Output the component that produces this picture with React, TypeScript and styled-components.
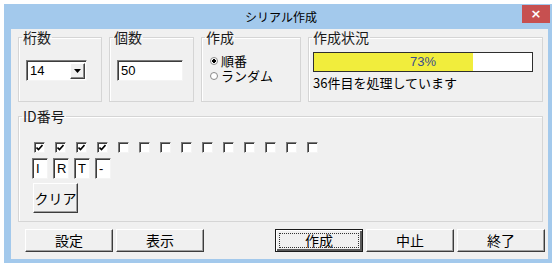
import styled, { createGlobalStyle } from "styled-components";

const GlobalStyle = createGlobalStyle`
  html, body {
    margin: 0;
    padding: 0;
    background: #ffffff;
  }
  body {
    font-family: "Liberation Sans", "Noto Sans CJK JP", sans-serif;
    color: #000;
  }
`;

const digits = ["I", "R", "T", "-"];
const checks = Array.from({ length: 14 }, (_, i) => i < 4);
const progress = 73;

export default function App() {
  return (
    <>
      <GlobalStyle />
      <Window>
        <TitleBar>
          <Title>シリアル作成</Title>
          <CloseButton>×</CloseButton>
        </TitleBar>
        <Client>
          <TopRow>
            <Group>
              <Legend>桁数</Legend>
              <GroupBody $top={16} $left={7}>
                <Combo>
                  <ComboText>14</ComboText>
                  <ComboArrow>
                    <svg width="7" height="4" viewBox="0 0 7 4">
                      <path d="M0 0h7L3.5 4z" fill="#000" />
                    </svg>
                  </ComboArrow>
                </Combo>
              </GroupBody>
            </Group>
            <Group>
              <Legend>個数</Legend>
              <GroupBody $top={16} $left={7}>
                <TextField $width={66}>50</TextField>
              </GroupBody>
            </Group>
            <Group>
              <Legend>作成</Legend>
              <GroupBody $top={9} $left={8}>
                <Radio $checked>順番</Radio>
                <Radio>ランダム</Radio>
              </GroupBody>
            </Group>
            <Group>
              <Legend>作成状況</Legend>
              <GroupBody $top={8} $left={4}>
                <ProgressBar>
                  <ProgressFill style={{ width: `${progress}%` }} />
                  <ProgressLabel>{progress}%</ProgressLabel>
                </ProgressBar>
                <StatusText>36件目を処理しています</StatusText>
              </GroupBody>
            </Group>
          </TopRow>
          <IdGroup>
            <Legend>ID番号</Legend>
            <GroupBody $top={19} $left={13}>
              <CheckRow>
                {checks.map((c, i) => (
                  <CheckBox key={i} $checked={c}>
                    {c && (
                      <svg width="7" height="7" viewBox="0 0 7 7">
                        <path d="M0.5 3.5l2 2 4-4.5" stroke="#000" strokeWidth="1.6" fill="none" />
                      </svg>
                    )}
                  </CheckBox>
                ))}
              </CheckRow>
              <CharRow>
                {digits.map((d) => (
                  <CharBox key={d}>{d}</CharBox>
                ))}
              </CharRow>
              <ClearButton>クリア</ClearButton>
            </GroupBody>
          </IdGroup>
          <ButtonRow>
            <ButtonGroup>
              <Button>設定</Button>
              <Button>表示</Button>
            </ButtonGroup>
            <ButtonGroup>
              <Button $default>作成</Button>
              <Button>中止</Button>
              <Button>終了</Button>
            </ButtonGroup>
          </ButtonRow>
        </Client>
      </Window>
    </>
  );
}

const Window = styled.div`
  margin: 4px 0 0 4px;
  width: 548px;
  height: 259px;
  background: #a3c9ec;
  display: flex;
  flex-direction: column;
`;

const TitleBar = styled.div`
  height: 26px;
  display: flex;
  align-items: flex-start;
  justify-content: center;
  position: relative;
`;

const Title = styled.div`
  margin-top: 6px;
  margin-left: 6px;
  font-family: "Noto Sans CJK JP", sans-serif;
  font-size: 12px;
  line-height: 14px;
  color: #000;
`;

const CloseButton = styled.div`
  position: absolute;
  top: 1px;
  right: 2px;
  width: 28px;
  height: 18px;
  background: #c75050;
  color: #fff;
  font-family: "DejaVu Sans", sans-serif;
  font-weight: bold;
  font-size: 13px;
  line-height: 18px;
  text-align: center;
`;

const Client = styled.div`
  flex: 1;
  margin: 0 4px 4px 7px;
  background: #f0f0f0;
  padding: 1px 5px 7px 7px;
  display: flex;
  flex-direction: column;
  gap: 7px;
`;

const TopRow = styled.div`
  display: grid;
  grid-template-columns: 84px 85px 100px 1fr;
  column-gap: 7px;
  height: 72px;
`;

const Group = styled.fieldset`
  margin: 0;
  padding: 0;
  min-width: 0;
  border: 1px solid #d5d5d5;
  box-shadow: inset 1px 1px 0 #ffffff;
`;

const IdGroup = styled(Group)`
  height: 113px;
  box-sizing: border-box;
`;

const Legend = styled.legend`
  margin-left: 3px;
  padding: 0 1px;
  font-family: "Noto Sans CJK JP", sans-serif;
  font-size: 14px;
  line-height: 14px;
  color: #1a1a1a;
`;

const GroupBody = styled.div<{ $top: number; $left: number }>`
  padding-top: ${(p) => p.$top}px;
  padding-left: ${(p) => p.$left}px;
  display: flex;
  flex-direction: column;
  align-items: flex-start;
`;

const sunken = `
  background: #fff;
  border-style: solid;
  border-width: 1px;
  border-color: #7a7a7a #f4f4f4 #f4f4f4 #7a7a7a;
  box-shadow: inset 1px 1px 0 #3c3c3c;
  box-sizing: border-box;
`;

const Combo = styled.div`
  ${sunken}
  width: 61px;
  height: 21px;
  display: flex;
  align-items: center;
  justify-content: space-between;
  padding: 0 1px 0 3px;
`;

const ComboText = styled.span`
  font-size: 13px;
  line-height: 15px;
`;

const ComboArrow = styled.div`
  width: 15px;
  height: 16px;
  box-sizing: border-box;
  background: #f0f0f0;
  border-style: solid;
  border-width: 1px;
  border-color: #fff #404040 #404040 #fff;
  box-shadow: inset -1px -1px 0 #8a8a8a;
  display: flex;
  align-items: center;
  justify-content: center;
`;

const TextField = styled.div<{ $width: number }>`
  ${sunken}
  width: ${(p) => p.$width}px;
  height: 21px;
  padding: 0 3px;
  font-size: 13px;
  line-height: 19px;
`;

const Radio = styled.div<{ $checked?: boolean }>`
  display: flex;
  align-items: center;
  gap: 3px;
  font-family: "Noto Sans CJK JP", sans-serif;
  font-size: 13px;
  line-height: 15px;
  &::before {
    content: "";
    width: 6px;
    height: 6px;
    border-radius: 50%;
    border: 1px solid #8a8a8a;
    background: ${(p) =>
      p.$checked ? "radial-gradient(circle, #000 0 1.6px, #fff 2px)" : "#fff"};
  }
`;

const ProgressBar = styled.div`
  position: relative;
  width: 220px;
  height: 20px;
  box-sizing: border-box;
  border: 1px solid #2e2e2e;
  background: #fff;
`;

const ProgressFill = styled.div`
  height: 100%;
  background: #f1ed3c;
`;

const ProgressLabel = styled.span`
  position: absolute;
  inset: 0;
  text-align: center;
  font-size: 13px;
  line-height: 18px;
  color: #3a4d8f;
`;

const StatusText = styled.div`
  margin-top: 3px;
  font-family: "Noto Sans CJK JP", sans-serif;
  font-size: 13px;
  line-height: 15px;
`;

const CheckRow = styled.div`
  display: flex;
  gap: 10px;
  padding-left: 2px;
`;

const CheckBox = styled.div<{ $checked?: boolean }>`
  ${sunken}
  width: 11px;
  height: 11px;
  display: flex;
  align-items: center;
  justify-content: center;
`;

const CharRow = styled.div`
  display: flex;
  gap: 5px;
  margin-top: 5px;
`;

const CharBox = styled.div`
  ${sunken}
  width: 16px;
  height: 21px;
  padding-left: 3px;
  font-size: 13px;
  line-height: 19px;
`;

const raised = `
  background: #f0f0f0;
  border-style: solid;
  border-width: 1px;
  border-color: #ffffff #3c3c3c #3c3c3c #ffffff;
  box-shadow: inset -1px -1px 0 #a0a0a0;
  box-sizing: border-box;
  font-family: "Noto Sans CJK JP", sans-serif;
  font-size: 14px;
  color: #000;
  text-align: center;
`;

const ClearButton = styled.div`
  ${raised}
  margin-top: 4px;
  margin-left: 1px;
  width: 45px;
  height: 30px;
  line-height: 28px;
`;

const ButtonRow = styled.div`
  display: flex;
  justify-content: space-between;
  margin: 0 -2px 0 7px;
`;

const ButtonGroup = styled.div`
  display: flex;
  gap: 3px;
`;

const Button = styled.div<{ $default?: boolean }>`
  ${raised}
  width: 88px;
  height: 23px;
  line-height: 21px;
  position: relative;
  ${(p) =>
    p.$default &&
    `
    border-color: #1a1a1a;
    box-shadow: inset 1px 1px 0 #fff, inset -2px -2px 0 #5a5a5a;
    &::after {
      content: "";
      position: absolute;
      inset: 3px;
      border: 1px dotted #333;
    }
  `}
`;
